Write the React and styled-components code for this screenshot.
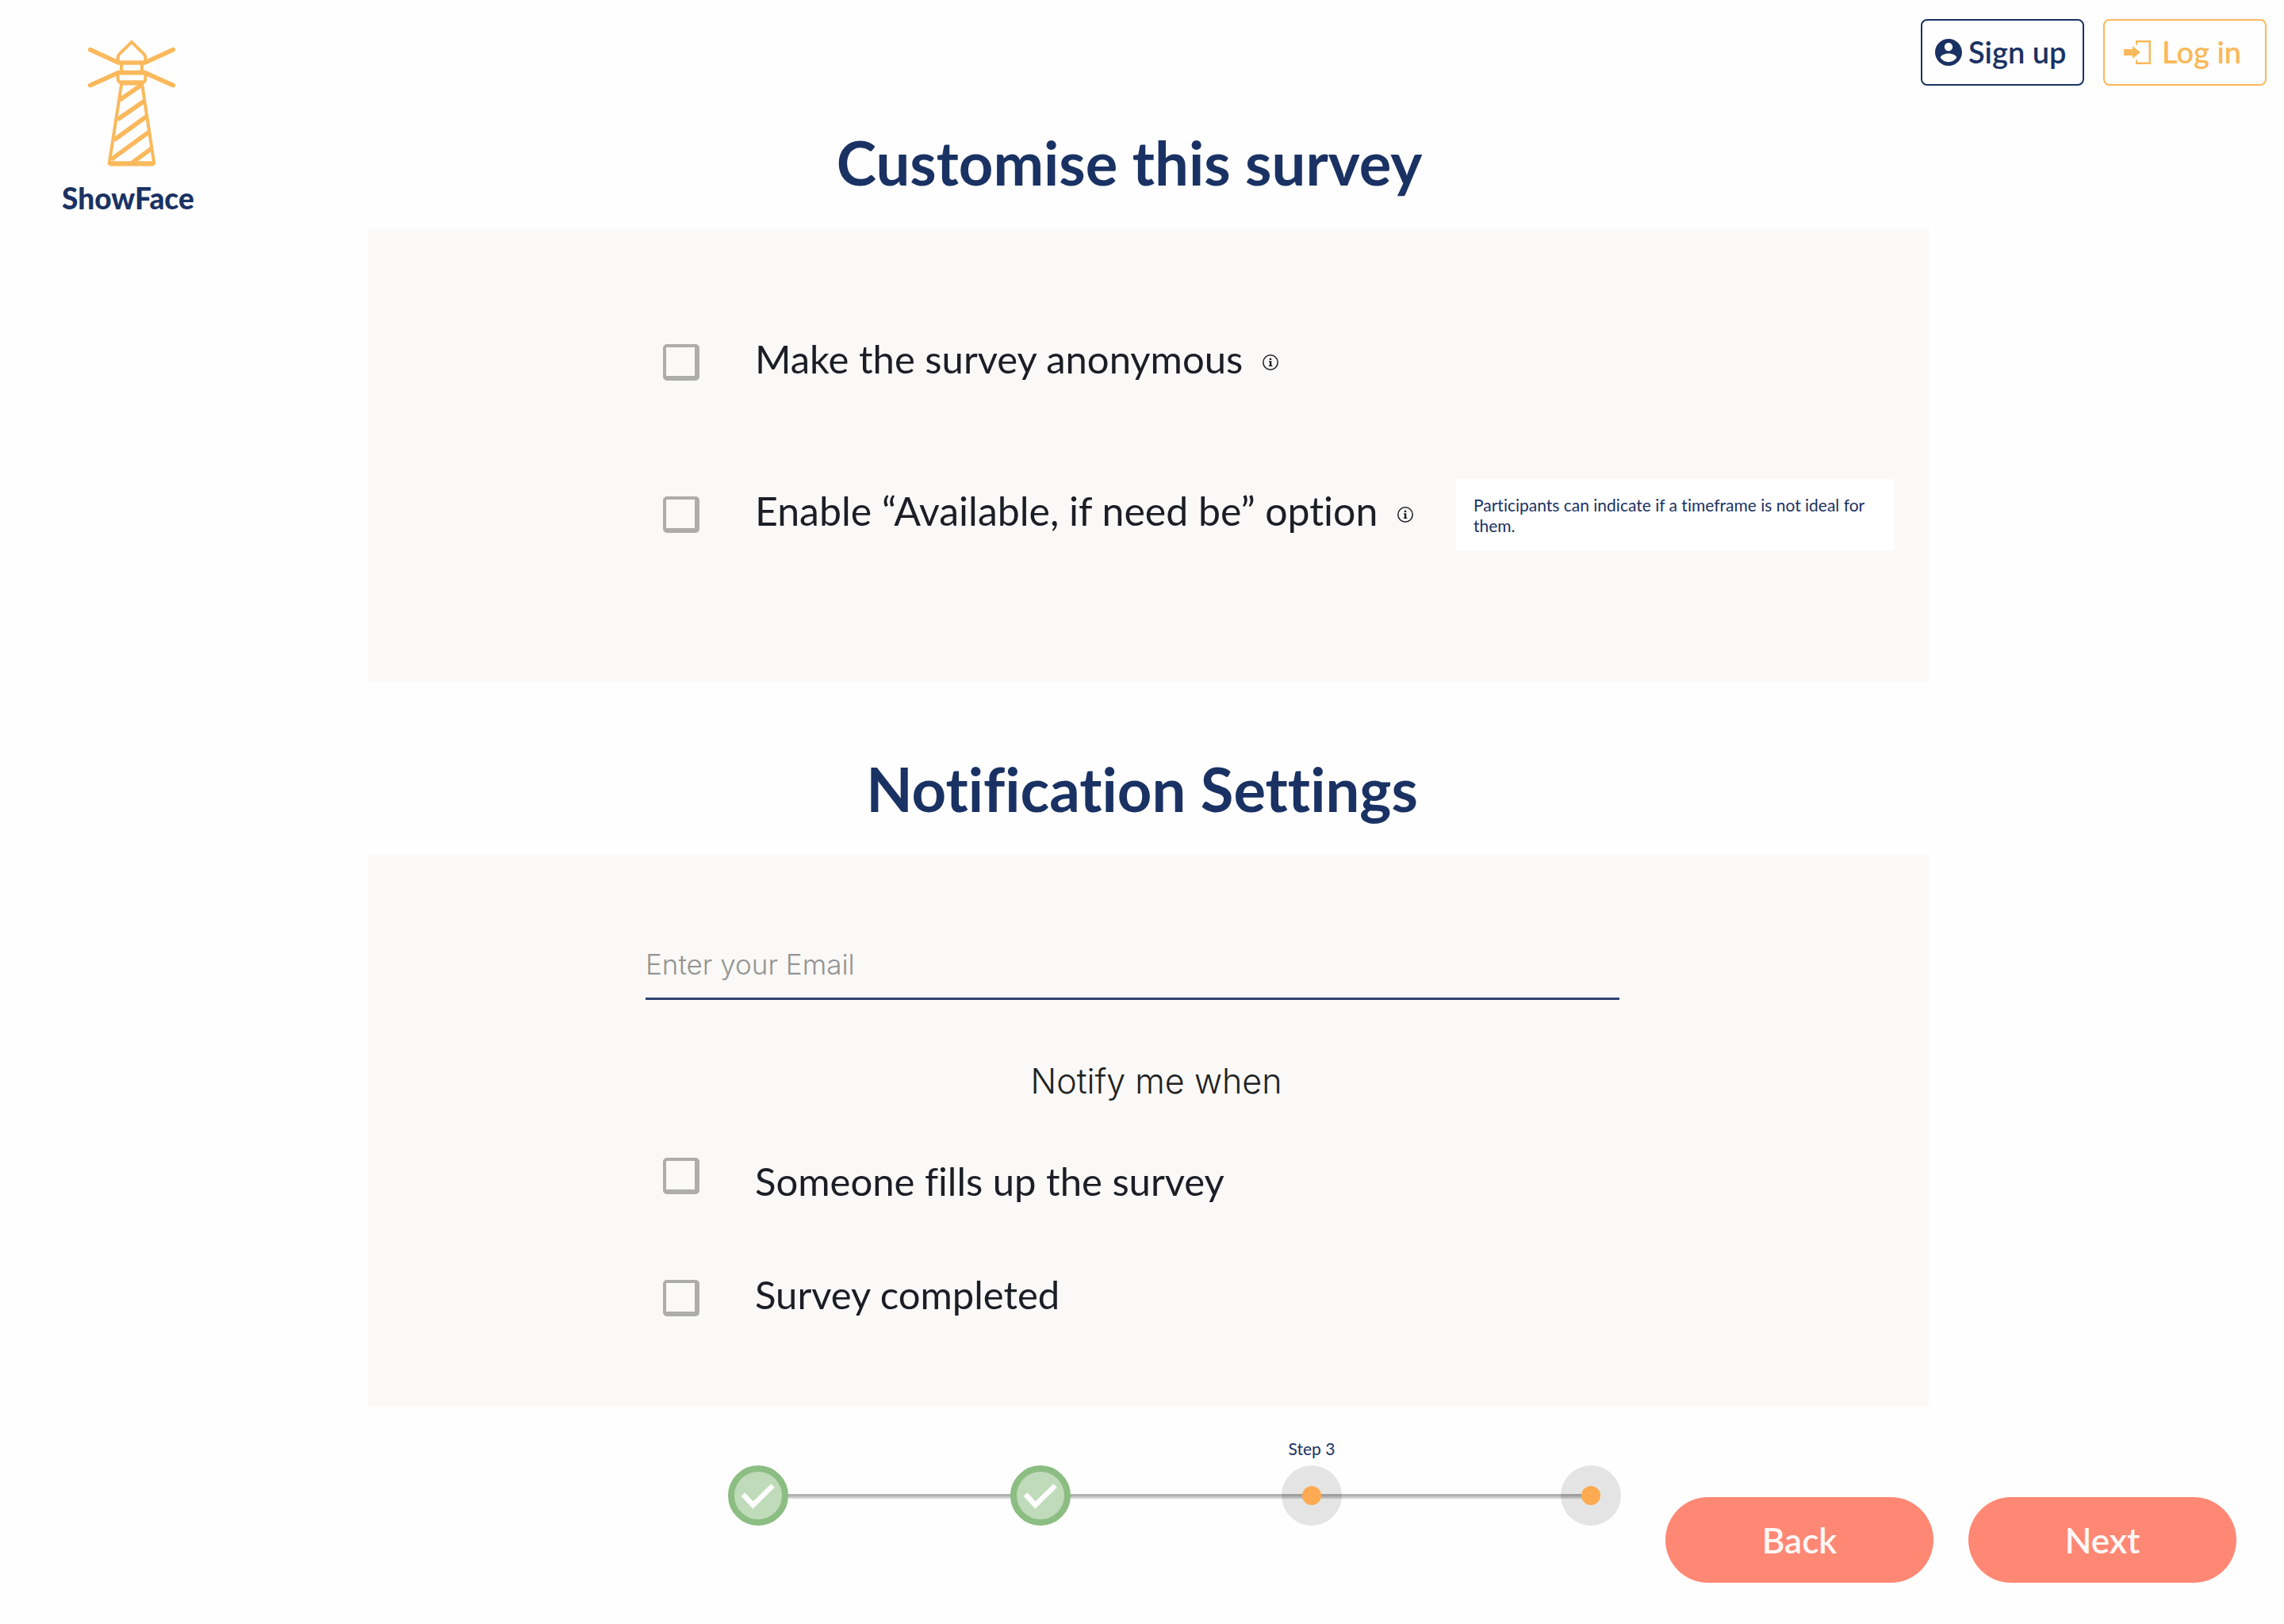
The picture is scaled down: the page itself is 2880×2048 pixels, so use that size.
import React from 'react';
import styled, { createGlobalStyle } from 'styled-components';

const navy = '#1a3263';
const amber = '#f9b95c';
const coral = '#ff8875';
const ink = '#1c1e26';
const panelGrey = '#faf9f7';

const GlobalStyle = createGlobalStyle`
  *, *::before, *::after { box-sizing: border-box; }
  body {
    margin: 0;
    background: #fefefe;
    color: ${ink};
    font-family: Lato, "Open Sans", sans-serif;
    font-variant-ligatures: none;
  }
  h1, h2, p, ol { margin: 0; padding: 0; }
  button, input { font-family: inherit; }
`;

const Page = styled.div`
  display: grid;
  grid-template-columns: 464px 1fr 448px;
  grid-template-rows: 108px auto 1fr;
  min-height: 100vh;
`;

const Brand = styled.a`
  grid-column: 1;
  grid-row: 1 / 3;
  justify-self: start;
  align-self: start;
  display: flex;
  flex-direction: column;
  align-items: center;
  gap: 20px;
  padding: 50px 0 0 78px;
  color: ${navy};
  font-size: 37px;
  font-weight: 900;
  line-height: 40px;
  text-decoration: none;
`;

const Lighthouse = styled.svg`
  display: block;
  width: 120px;
  height: 160px;
  fill: none;
  stroke: ${amber};
  stroke-linejoin: round;
`;

const AccountBar = styled.nav`
  grid-column: 2 / 4;
  grid-row: 1;
  display: flex;
  justify-content: flex-end;
  gap: 24px;
  padding: 24px 22px 0;
`;

const AccountButton = styled.button`
  display: flex;
  align-items: center;
  gap: ${(p) => p.$gap}px;
  width: 206px;
  height: 84px;
  padding: 0 0 0 ${(p) => p.$inset}px;
  border: 2px solid ${(p) => p.$tone};
  border-radius: 8px;
  background: transparent;
  color: ${(p) => p.$tone};
  font-size: 38px;
  font-weight: 600;
  line-height: 40px;
  white-space: nowrap;
  cursor: pointer;

  svg { flex: none; fill: currentColor; }
  span { padding-bottom: 2px; }
`;

const Main = styled.main`
  grid-column: 2;
  grid-row: 2;
  display: flex;
  flex-direction: column;
  gap: 95px;
  padding-top: 57px;
`;

const Heading = styled.h2`
  padding: 0 ${(p) => p.$inset}px 43px 0;
  color: ${navy};
  font-size: 76px;
  font-weight: 700;
  line-height: 80px;
  text-align: center;
`;

const Panel = styled.div`
  display: flex;
  flex-direction: column;
  background: ${panelGrey};
  padding: ${(p) => p.$padding};
`;

const OptionList = styled.div`
  display: flex;
  flex-direction: column;
  gap: ${(p) => p.$gap}px;
`;

const OptionRow = styled.div`
  display: flex;
  align-items: ${(p) => (p.$top ? 'flex-start' : 'center')};
  height: 72px;
`;

const Tick = styled.input`
  appearance: none;
  flex: none;
  width: 46px;
  height: 46px;
  margin: 0 70px 0 0;
  border: solid #adadab;
  border-width: 4px 6px 6px 4px;
  border-radius: 5px;
  background: transparent;
  cursor: pointer;

  &:checked { background: ${navy}; }
`;

const OptionLabel = styled.label`
  padding-bottom: 10px;
  font-size: ${(p) => (p.$large ? 50 : 49)}px;
  line-height: 58px;
  white-space: nowrap;
`;

const InfoButton = styled.button`
  display: block;
  width: 20px;
  height: 20px;
  margin-left: 25px;
  padding: 0;
  border: 0;
  background: none;
  color: ${ink};
  cursor: pointer;

  svg { display: block; }
`;

const Hint = styled.p`
  width: 552px;
  margin-left: auto;
  padding: 20px 22px 18px;
  background: #fff;
  color: ${navy};
  font-size: 21px;
  line-height: 26px;
`;

const EmailField = styled.input`
  height: 87px;
  margin: 0 390px 0 350px;
  padding: 0;
  border: 0;
  border-bottom: 3px solid #2d4372;
  border-radius: 0;
  outline: 0;
  background: transparent;
  color: ${ink};
  && { font-family: Inter, "Open Sans", sans-serif; }
  font-size: 35px;
  font-weight: 300;

  &::placeholder { color: #949492; opacity: 1; }
`;

const NotifyGroup = styled.div`
  display: flex;
  flex-direction: column;
  gap: 73px;
  padding: 78px 352px 0 372px;
`;

const NotifyTitle = styled.p`
  color: #222;
  font-family: Inter, "Open Sans", sans-serif;
  font-size: 43px;
  font-weight: 300;
  line-height: 48px;
  text-align: center;
`;

const Footer = styled.footer`
  grid-column: 1 / 4;
  grid-row: 3;
  display: flex;
  align-items: flex-start;
  gap: 56px;
  padding: 0 60px 0 918px;
`;

const Stepper = styled.ol`
  position: relative;
  flex: 1;
  display: grid;
  grid-template-columns: 356fr 342fr 352fr 76px;
  && { margin-top: 41px; }
  list-style: none;

  &::before {
    content: "";
    position: absolute;
    left: 38px;
    right: 38px;
    top: 69px;
    height: 6px;
    background: linear-gradient(#b0b3b0 0 50%, #c2c3c2 50% 67%, #d6d6d6 67%);
  }
`;

const Step = styled.li`
  position: relative;
  display: flex;
  flex-direction: column;
  align-items: center;
  gap: 9px;
  width: 76px;
`;

const StepName = styled.span`
  height: 24px;
  color: ${navy};
  font-size: 21px;
  line-height: 24px;
  white-space: nowrap;
`;

const StepMark = styled.span`
  display: grid;
  place-items: center;
  width: 76px;
  height: 76px;
  border: ${(p) => (p.$done ? '8px solid #8cbd82' : '0')};
  border-radius: 50%;
  background: ${(p) => (p.$done ? '#bfdbb9' : 'rgba(0, 0, 0, 0.1)')};
`;

const StepDot = styled.span`
  width: 24px;
  height: 24px;
  border-radius: 50%;
  background: #fdaa52;
`;

const Actions = styled.div`
  display: flex;
  gap: 44px;
  padding-top: 114px;
`;

const ActionButton = styled.button`
  width: 338px;
  height: 108px;
  border: 0;
  border-radius: 54px;
  background: ${coral};
  color: #fdf8f7;
  font-size: 44px;
  font-weight: 600;
  cursor: pointer;
`;

function LighthouseIcon() {
  return (
    <Lighthouse viewBox="120 60 360 480" aria-hidden="true">
      <g strokeWidth="17" strokeLinecap="round">
        <path d="M158 98 265 147H365L472 98" />
        <path d="M158 233 265 185H365L472 233" />
      </g>
      <g strokeWidth="12">
        <path d="M263 147V126Q263 120 268 115L315 69 362 115Q367 120 367 126V147" strokeLinejoin="miter" />
        <path d="M276 147V186M354 147V186" />
        <path d="M263 186V208Q263 222 276 223H354Q367 222 367 208V186" />
        <path d="M277 226 230 529H400L354 226" />
      </g>
      <path d="M272 223H358M232 529H398" strokeWidth="19" />
      <path d="M270 288 354 230M262 362 362 293M248 440 372 350M238 513 378 411M315 527 390 472" strokeWidth="17" />
    </Lighthouse>
  );
}

function AccountIcon() {
  return (
    <svg width="34" height="34" viewBox="2 2 20 20" aria-hidden="true">
      <path d="M12 2C6.48 2 2 6.48 2 12s4.48 10 10 10 10-4.48 10-10S17.52 2 12 2zm0 3c1.66 0 3 1.34 3 3s-1.34 3-3 3-3-1.34-3-3 1.34-3 3-3zm0 14.2c-2.5 0-4.71-1.28-6-3.22.03-1.99 4-3.08 6-3.08 1.99 0 5.97 1.09 6 3.08-1.29 1.94-3.5 3.22-6 3.22z" />
    </svg>
  );
}

function LoginIcon() {
  return (
    <svg width="34" height="30" viewBox="0 0 34 30" aria-hidden="true">
      <path d="M0 11H11V7L21 15 11 23V19H0z" />
      <path d="M15 0H34V30H15V25.500L17 23.500V27.500H31.500V2.500H17V6.500L15 4.500z" />
    </svg>
  );
}

function InfoIcon() {
  return (
    <svg width="20" height="20" viewBox="0 0 20 20" aria-hidden="true">
      <circle cx="10" cy="10" r="9.200" fill="none" stroke="currentColor" strokeWidth="1.500" />
      <path d="M8.800 4.800h2.400v2.200H8.800zM8 8.300h3.300v5.400h1v1.300H7.800v-1.300h1.100V9.600H8z" fill="currentColor" />
    </svg>
  );
}

function CheckIcon() {
  return (
    <svg width="60" height="60" viewBox="8 8 60 60" aria-hidden="true">
      <path d="M19 36.500 31.500 50 56.500 25.500" fill="none" stroke="#fff" strokeWidth="6.500" />
    </svg>
  );
}

const steps = [
  { id: 1, done: true },
  { id: 2, done: true },
  { id: 3, name: 'Step 3' },
  { id: 4 },
];

function Option({ id, children, large, top, info, hint }) {
  return (
    <OptionRow $top={top}>
      <Tick type="checkbox" id={id} />
      <OptionLabel htmlFor={id} $large={large}>{children}</OptionLabel>
      {info && (
        <InfoButton type="button" aria-label="More information">
          <InfoIcon />
        </InfoButton>
      )}
      {hint && <Hint role="note">{hint}</Hint>}
    </OptionRow>
  );
}

export default function App() {
  return (
    <>
      <GlobalStyle />
      <Page>
        <Brand href="#">
          <LighthouseIcon />
          ShowFace
        </Brand>

        <AccountBar aria-label="Account">
          <AccountButton type="button" $tone={navy} $inset={16} $gap={8}>
            <AccountIcon />
            <span>Sign up</span>
          </AccountButton>
          <AccountButton type="button" $tone={amber} $inset={24} $gap={14}>
            <LoginIcon />
            <span>Log in</span>
          </AccountButton>
        </AccountBar>

        <Main>
          <section>
            <Heading as="h1" $inset={48}>Customise this survey</Heading>
            <Panel $padding="133px 44px 175px 372px">
              <OptionList $gap={120}>
                <Option id="anonymous" info>Make the survey anonymous</Option>
                <Option
                  id="if-need-be"
                  large
                  info
                  hint="Participants can indicate if a timeframe is not ideal for them."
                >
                  Enable “Available, if need be” option
                </Option>
              </OptionList>
            </Panel>
          </section>

          <section>
            <Heading $inset={16}>Notification Settings</Heading>
            <Panel $padding="96px 0 101px">
              <EmailField type="email" placeholder="Enter your Email" aria-label="Email" />
              <NotifyGroup role="group" aria-labelledby="notify-title">
                <NotifyTitle id="notify-title">Notify me when</NotifyTitle>
                <OptionList $gap={69}>
                  <Option id="filled" top>Someone fills up the survey</Option>
                  <Option id="completed">Survey completed</Option>
                </OptionList>
              </NotifyGroup>
            </Panel>
          </section>
        </Main>

        <Footer>
          <Stepper>
            {steps.map((step) => (
              <Step key={step.id}>
                <StepName>{step.name}</StepName>
                <StepMark $done={step.done}>
                  {step.done ? <CheckIcon /> : <StepDot />}
                </StepMark>
              </Step>
            ))}
          </Stepper>
          <Actions>
            <ActionButton type="button">Back</ActionButton>
            <ActionButton type="button">Next</ActionButton>
          </Actions>
        </Footer>
      </Page>
    </>
  );
}
